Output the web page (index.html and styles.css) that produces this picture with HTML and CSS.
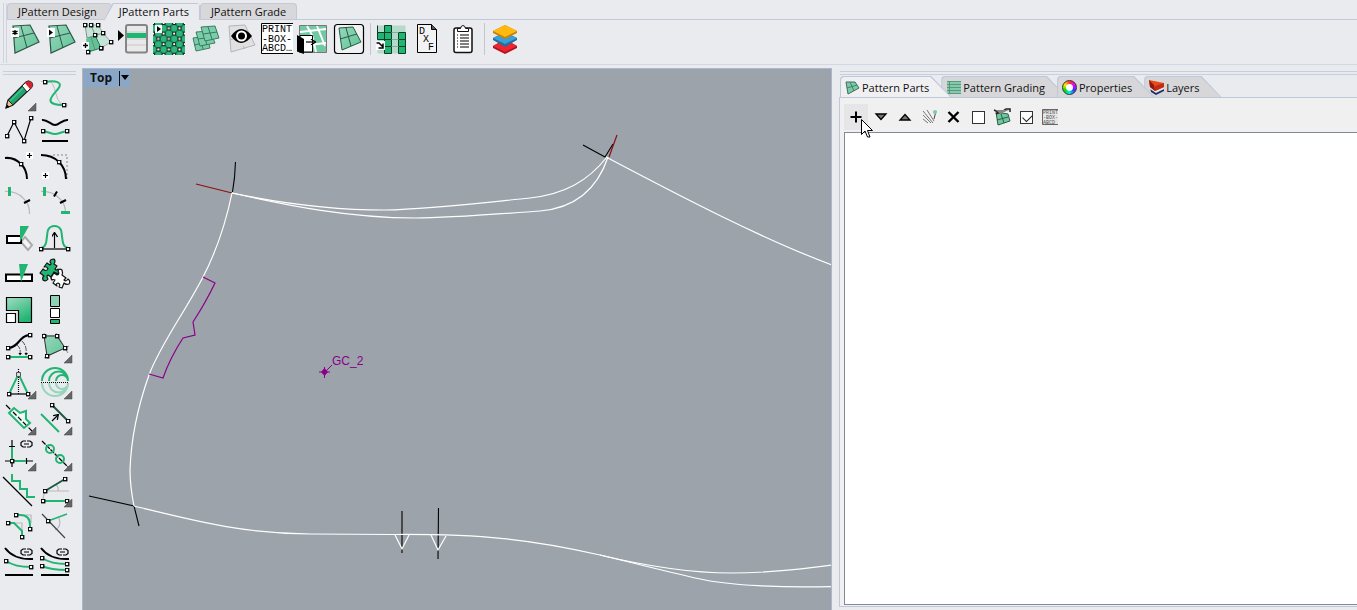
FILE: index.html
```html
<!DOCTYPE html>
<html lang="en">
<head>
<meta charset="utf-8">
<title>JPattern Parts</title>
<link rel="stylesheet" href="styles.css">
</head>
<body>
<svg class="defs" aria-hidden="true">
  <defs>
    <marker id="node" viewBox="0 0 5 5" refX="2.5" refY="2.5" markerWidth="5" markerHeight="5" markerUnits="userSpaceOnUse"><rect x=".75" y=".75" width="3.5" height="3.5" fill="#fff" stroke="#000" stroke-width="1.3"/></marker>
    <marker id="tip" viewBox="0 0 6 6" refX="5" refY="3" markerWidth="6" markerHeight="6" markerUnits="userSpaceOnUse" orient="auto"><path d="M1 0L5.5 3L1 6" fill="none" stroke="#000" stroke-width="1.3"/></marker>
    <linearGradient id="mint" x1="0" y1="0" x2="1" y2="1"><stop offset="0" stop-color="#98d6bb"/><stop offset="1" stop-color="#5fc597"/></linearGradient>
    <linearGradient id="deep" x1="0" y1="0" x2=".6" y2="1"><stop offset="0" stop-color="#a3dcc4"/><stop offset="1" stop-color="#21b573"/></linearGradient>
    <pattern id="net" x="2" y="2" width="10.600" height="10.600" patternUnits="userSpaceOnUse"><rect width="11" height="11" fill="#2db67b"/><path d="M0 0L10.600 10.600M10.600 0L0 10.600" stroke="#0f7a4d" stroke-width="1.400"/><g fill="#fff" stroke="#000" stroke-width=".9"><path d="M3.800 3.800h3v3h-3zM-1.500 -1.500h3v3h-3zM9.100 -1.500h3v3h-3zM-1.500 9.100h3v3h-3zM9.100 9.100h3v3h-3z"/></g></pattern>
    <symbol id="patch" viewBox="0 0 36 36"><path d="M6 5L23 4L32 21L8 32Z" fill="url(#mint)" stroke="#2f5546" stroke-width="1.2"/><path d="M14 5L20 27M7 17L27 12" stroke="#2f5546" stroke-width="1" fill="none"/></symbol>
    <symbol id="chain" viewBox="0 0 13 8"><path d="M6 1H3L1 2.500V5.500L3 7H6M7 1H10L12 2.500V5.500L10 7H7M4 4H9" fill="none" stroke="#000" stroke-width="1.2"/></symbol>
    <symbol id="corner" viewBox="0 0 36 36"><path d="M35 27V35H27Z" fill="#666" stroke="#444" stroke-width=".5"/></symbol>
  </defs>
</svg>

<header class="ribbon">
  <div class="grip-v"></div>
  <div class="ribbon-main">
    <nav class="ribbon-tabs" role="tablist">
      <button class="rtab" role="tab">JPattern Design</button>
      <button class="rtab on" role="tab" aria-selected="true">JPattern Parts</button>
      <button class="rtab" role="tab">JPattern Grade</button>
    </nav>
    <div class="ribbon-tools" role="toolbar">
      <button class="tool" aria-label="New pattern part"><svg viewBox="0 0 36 36"><use href="#patch"/><path d="M4 7h8v9h-8z" fill="#fff"/><path d="M8 9v5M5.500 10.200l5 2.600M10.500 10.200l-5 2.600" stroke="#000" stroke-width="1.300"/></svg></button>
      <button class="tool" aria-label="Select part"><svg viewBox="0 0 36 36"><use href="#patch"/><path d="M4 7h8v9h-8z" fill="#fff"/><path d="M6 8.500l4 3-4 3z"/></svg></button>
      <button class="tool" aria-label="Add geometry"><svg viewBox="0 0 36 36"><path d="M7 4H19L32 21L22 27L17 14L7 18Z" fill="#c3e4d6"/><path d="M7 18L16 14L22 27L9 31Z" fill="#5fc597"/><path d="M12 4L16 14M6 4L8 17L24 12M12 16L16 29" fill="none" stroke="#777" stroke-width=".8"/><path d="M6 4L12 4L19 4L24 12L32 21L22 27" fill="none" stroke="#999" stroke-width=".8" marker-start="url(#node)" marker-mid="url(#node)" marker-end="url(#node)"/><path d="M16 14L22 27L9 31" fill="none" stroke="#275" stroke-width="1" marker-start="url(#node)" marker-mid="url(#node)" marker-end="url(#node)"/><path d="M3 21h7v7h-7z" fill="#fff"/><path d="M6.500 22v5M4 24.500h5" stroke="#000" stroke-width="1.300"/></svg></button>
      <button class="tool" aria-label="Part list"><svg viewBox="0 0 36 36"><path d="M3 9l6 5.500-6 5.500z"/><rect x="11" y="4" width="21" height="27.500" rx="2" fill="#e9e9e9" stroke="#858585" stroke-width="2"/><path d="M12 12h19v5h-19z" fill="#21b573"/><path d="M12 18h19M12 24h19M12 11h19" stroke="#c8c8c8"/></svg></button>
      <button class="tool" aria-label="Select net"><svg viewBox="0 0 36 36"><path d="M2 2h32v32h-32z" fill="url(#net)"/><path d="M4 4h7v8h-7z" fill="#fff"/><path d="M6 5l4 3-4 3z"/></svg></button>
      <button class="tool" aria-label="Duplicate part"><svg viewBox="0 0 36 36"><g fill="#7bcdaa" stroke="#2f7358" stroke-width=".9"><path d="M6 17L20 15L23 27L9 30ZM13 16L16 28M7 24L22 21"/><path d="M9 11L23 10L28 22L13 25ZM16 10L20 24M11 18L26 16"/><path d="M14 6L28 5L32 17L18 20ZM21 6L25 18M16 13L30 11"/></g></svg></button>
      <button class="tool" aria-label="Show parts"><svg viewBox="0 0 36 36"><path d="M6 5L22 4L32 24L8 31ZM7 19L12 17M24 20L28 15M20 25L22 28" fill="#e0e0e2" stroke="#b5b5b5"/><path d="M8 15Q18 1 29 15Q18 29 8 15Z"/><circle cx="18.500" cy="15" r="5.500" fill="#fff"/><circle cx="18.500" cy="15" r="3.500"/></svg></button>
      <button class="tool" aria-label="Print box"><svg viewBox="0 0 36 36"><path d="M2 2h32v31h-32z" fill="#fff"/><path d="M34 2.500H2.500V32.500H34" fill="none" stroke="#000"/><text class="pixel big" x="3" y="11">PRINT</text><text class="pixel big" x="3" y="21">-BOX-</text><text class="pixel big" x="3" y="30">ABCD…</text></svg></button>
      <button class="tool" aria-label="Export layout"><svg viewBox="0 0 36 36"><path d="M4.500 4.500h27v27h-27z" fill="#70c9a2" stroke="#777"/><path d="M5 11L31 8M5 25L31 22M12 5L17 14L21 31M22 5L30 25" stroke="#fff" stroke-width="2" fill="none"/><path d="M5 14.500h12.500v16.500h-12.500z" fill="#fff" stroke="#000"/><path d="M2 14L9 18V33L2 30.500Z"/><path d="M11 21H20" stroke="#000" stroke-width="1.200" marker-end="url(#tip)"/></svg></button>
      <button class="tool" aria-label="Framed part"><svg viewBox="0 0 36 36"><rect x="3.500" y="3.500" width="29" height="29" rx="3" fill="#eff1f3" stroke="#000" stroke-width="1.200"/><path d="M8 7L22 6L30 21L11 29Z" fill="url(#mint)" stroke="#275a45"/><path d="M15 7L20 25M9 18L26 13" stroke="#275a45"/></svg></button>
      <span class="sep"></span>
      <button class="tool" aria-label="Grading table"><svg viewBox="0 0 36 36"><path d="M4.500 4.500h28v28h-28z" fill="#b5d9ca"/><path d="M11.500 4.500h7v28h-7zM4.500 11.500h7v7h-7zM25.500 11.500h7v21h-7z" fill="#21b573"/><path d="M11.500 4.500v28M18.500 4.500v28M25.500 11.500v21M4.500 11.500h14M4.500 18.500h14M11.500 25.500h7M25.500 11.500h7v21h-7M25.500 18.500h7M25.500 25.500h7M4.500 4.500v14M11.500 4.500h7M11.500 32.500h7" fill="none" stroke="#063d26"/><path d="M18.500 18.500h7M18.500 25.500h7M18.500 11.500h7" stroke="#7fae9b"/><path d="M3 20h9v9h-9z" fill="#fff"/><path d="M3.500 22H6L10 26M10 22.500V27H5.500" fill="none" stroke="#000" stroke-width="1.500"/></svg></button>
      <button class="tool" aria-label="Export DXF"><svg viewBox="0 0 36 36"><path d="M8.500 3.500h14l5 5v23h-19z" fill="#f3f3f3" stroke="#000"/><path d="M22.500 3.500v5h5" fill="#555" stroke="#000"/><text class="pixel big" x="10" y="13">D</text><text class="pixel big" x="14" y="21">X</text><text class="pixel big" x="19" y="29">F</text></svg></button>
      <button class="tool" aria-label="Clipboard"><svg viewBox="0 0 36 36"><rect x="9" y="7" width="18" height="24.500" rx="2" fill="#fff" stroke="#111" stroke-width="1.500"/><path d="M12.500 10.500V7.500H15.500Q16 4.500 18 4.500Q20 4.500 20.500 7.500H23.500V10.500Z" fill="#fff" stroke="#111"/><path d="M12 14h1M15 14h9M12 17h1M15 17h9M12 20h1M15 20h9M12 23h1M15 23h9M12 26h1M15 26h9" stroke="#000" stroke-width="1.200"/></svg></button>
      <span class="sep"></span>
      <button class="tool" aria-label="Layers"><svg viewBox="0 0 36 36"><path d="M6 25L18 18L30 25V27L18 33L6 27Z" fill="#b5121b"/><path d="M6 25L18 19L30 25L18 31Z" fill="#ee2430"/><path d="M6 17L18 11L30 17V19L18 26L6 19Z" fill="#256f9f"/><path d="M6 17L18 11L30 17L18 23Z" fill="#3aa0da"/><path d="M6 10L18 4L30 10V12L18 18L6 12Z" fill="#c98205"/><path d="M6 10L18 4L30 10L18 16Z" fill="#ffb90f"/></svg></button>
    </div>
  </div>
</header>

<main class="work">
  <aside class="palette" role="toolbar">
    <div class="grip-h"></div>
    <div class="palette-grid">
      <button class="tool" aria-label="Pencil"><svg viewBox="0 0 36 36"><path d="M5 32L7 24L25 6Q28 4 30.500 6.500Q33 9 30 12L12 29Z" fill="#21a56d" stroke="#222" stroke-width="1.200"/><path d="M5 32L7 24L12 29Z" fill="#efc08c" stroke="#222"/><path d="M5 32L6 28.500L8.500 31Z"/><path d="M21 10L26 16L30 12Q33 9 30.500 6.500Q28 4 25 6Z" fill="#fff" stroke="#222"/><path d="M24 7L29 13L31 11Q32.500 8.500 30.500 6.500Q28 4.500 25 6Z" fill="#d3242c"/><path d="M9 25L22 12" stroke="#35c98b" stroke-width="1.500"/><use href="#corner"/></svg></button>
      <button class="tool" aria-label="Curve"><svg viewBox="0 0 36 36"><path d="M4 5.500H12Q16 5 19 18T31 29" fill="none" stroke="#bbb"/><path class="g" d="M8 6C18 4 27 6 21 13C15 20 5 29 27 29"/><path d="M8 6h.01" marker-start="url(#node)"/><path d="M27 29h.01" marker-start="url(#node)"/></svg></button>

      <button class="tool" aria-label="Polyline"><svg viewBox="0 0 36 36"><path class="b thin nodes" d="M6 24L13 10L23 29L30 6"/></svg></button>
      <button class="tool" aria-label="Average curve"><svg viewBox="0 0 36 36"><path class="b" d="M5 8C10 7 14 13 18 13S26 7 31 8M5 29H31"/><path class="g ends" d="M6 19C12 20 14 22 18 22S24 20 30 19"/></svg></button>

      <button class="tool" aria-label="Add point"><svg viewBox="0 0 36 36"><path class="b nodes-mid" d="M4 10Q13 9 20 16Q26 22 26 31"/><path d="M25 4h7v7h-7z" fill="#fff"/><path class="b thin" d="M28.500 5v5M26 7.500h5"/></svg></button>
      <button class="tool" aria-label="Add corner"><svg viewBox="0 0 36 36"><path d="M16 7H30V31" fill="none" stroke="#b8b8bc" stroke-width="2" stroke-dasharray="2 2"/><path class="b nodes-mid" d="M4 7Q15 7 22 14Q29 21 29 31"/><path d="M5 24h7v7h-7z" fill="#fff"/><path class="b thin" d="M8.500 25v5M6 27.500h5"/></svg></button>

      <button class="tool" aria-label="Point on arc"><svg viewBox="0 0 36 36"><path class="s" d="M4 7.500Q15 7 22 14Q29 20 28.500 30"/><path d="M8.500 3v9" stroke="#21b573" stroke-width="3"/><path class="b" d="M23 19l6-3"/></svg></button>
      <button class="tool" aria-label="Divide arc"><svg viewBox="0 0 36 36"><path class="s" d="M4 7.500Q15 7 22 14Q29 20 28.500 30"/><path d="M7.500 3v9M24 28.500h9" stroke="#21b573" stroke-width="3"/><path class="b" d="M17 12.500l3-5M23 19l6-3"/></svg></button>

      <button class="tool" aria-label="Cut"><svg viewBox="0 0 36 36"><path d="M24 17L31 25L27 30L20 22Z" fill="#f4f4f4" stroke="#aaa" stroke-width="2"/><path d="M6 16h14v7h-14z" fill="#fff" stroke="#000" stroke-width="2"/><path d="M19 6h9l-9 16z" fill="#21b573"/></svg></button>
      <button class="tool" aria-label="Bell curve"><svg viewBox="0 0 36 36"><path class="g" d="M4 28C11 27 9 17 11 10Q13 6 17.500 6T24 10C26 17 24 27 31 28"/><path class="b thin nodes" d="M4 29H31"/><path class="b thin" d="M17.500 28V13" marker-end="url(#tip)"/></svg></button>

      <button class="tool" aria-label="Split"><svg viewBox="0 0 36 36"><path d="M5 18.500h26v6.500h-26z" fill="#fff" stroke="#000" stroke-width="2"/><path d="M18 8h9l-7 18z" fill="#21b573"/></svg></button>
      <button class="tool" aria-label="Join pieces"><svg viewBox="0 0 36 36"><g stroke="#111" stroke-width="1.200" stroke-linejoin="round"><path d="M10 7L13 9Q15 8 13 6Q13 3 17 3Q19 5 17 8L20 10L18 13Q20 15 21 13Q24 14 22 17Q19 18 17 16L14 21L11 19Q9 20 11 23Q9 26 6 24Q5 21 7 20L3 17L6 13Q9 16 11 13Q10 10 7 11Z" fill="#21b573"/><path d="M17 17L20 19Q23 18 21 15Q22 12 25 14Q26 17 25 19L29 22L27 24Q29 26 31 23Q34 25 32 28Q29 29 27 27L25 32L22 31Q24 28 21 27Q18 28 20 30L16 27L18 24Q16 23 15 24Q13 22 15 20Z" fill="#fff"/></g></svg></button>

      <button class="tool" aria-label="Scale"><svg viewBox="0 0 36 36"><path d="M5.500 5.500H30.500V30.500H17.500V18.500H5.500Z" fill="url(#deep)" stroke="#000" stroke-width="1.200"/><path d="M5.500 21.500h9v9h-9z" fill="#fff" stroke="#000" stroke-width="1.200"/></svg></button>
      <button class="tool" aria-label="Distribute"><svg viewBox="0 0 36 36"><g stroke="#000"><path d="M13.500 3.500h9v11h-9z" fill="#8fd3b6"/><path d="M13.500 16.500h9v9h-9z" fill="#fff"/><path d="M13.500 27.500h9v4h-9z" fill="#21b573"/></g></svg></button>

      <button class="tool" aria-label="Project"><svg viewBox="0 0 36 36"><path class="b nodes" d="M7 20C18 20 18 7 29 7"/><path d="M16 17Q20 20 19 25M21 13Q26 18 25 25" fill="none" stroke="#555" stroke-dasharray="5 1"/><path d="M17.500 25h3.500l-2 2.500zM23.500 25h3.500l-2 2.500z"/><path class="g nodes" d="M7 29H29"/></svg></button>
      <button class="tool" aria-label="Close shape"><svg viewBox="0 0 36 36"><path d="M5 8H22M19 5L31 25M32 18L7 30M11 31L7 5" stroke="#888" stroke-width="1"/><path d="M7 8H20L28 20L10 28Z" fill="url(#mint)" stroke="#333"/><path class="nodes" d="M7 8L20 8L28 20L10 28" fill="none"/><use href="#corner"/></svg></button>

      <button class="tool" aria-label="Mirror"><svg viewBox="0 0 36 36"><path class="g" d="M8 30L17.500 10L27 30"/><path class="b thin nodes" d="M8 30H27"/><path d="M17.500 5V30" stroke="#000" stroke-dasharray="1 1" stroke-width="1.200"/><path d="M15.500 8.500h4v4h-4z" fill="#ddd" stroke="#555"/><use href="#corner"/></svg></button>
      <button class="tool" aria-label="Nested circles"><svg viewBox="0 0 36 36"><g fill="none" stroke="#21b573" stroke-width="2"><path d="M5 17A13 13 0 0 1 31 17M12 17A9.500 9.500 0 0 1 31 17M19 17A6 6 0 0 1 31 17"/><path d="M5 19A13 13 0 0 0 31 19M12 19A9.500 9.500 0 0 0 31 19M19 19A6 6 0 0 0 31 19" opacity=".4"/></g><path d="M4 18.500H32" stroke="#000" stroke-dasharray="1 1"/><use href="#corner"/></svg></button>

      <button class="tool" aria-label="Notch"><svg viewBox="0 0 36 36"><path class="b thin" stroke-dasharray="6 2" d="M5 5L31 31"/><path d="M8 13L13 8L19 13L25 11L25 19L29 23L23 28Z" fill="#eef8f4" stroke="#21b573" stroke-width="2"/><path class="b thin" stroke-dasharray="5 2" d="M12 12L25 25"/><use href="#corner"/></svg></button>
      <button class="tool" aria-label="Offset line"><svg viewBox="0 0 36 36"><path class="g" d="M4 14L22 32"/><path d="M15 5L31 21" stroke="#1b5a41" stroke-width="2" marker-start="url(#node)" marker-end="url(#node)"/><path class="b thin" d="M15 21L21 15" marker-end="url(#tip)"/><use href="#corner"/></svg></button>

      <button class="tool" aria-label="Linked axes"><svg viewBox="0 0 36 36"><path class="b thin" d="M11 4V31M4 25H32M8 10.500h6M25.500 22v6"/><path class="g" d="M11 11V25H25"/><path d="M11 25h.01" marker-start="url(#node)"/><use href="#chain" x="19" y="4" width="13" height="8"/><use href="#corner"/></svg></button>
      <button class="tool" aria-label="Button holes"><svg viewBox="0 0 36 36"><path class="b thin" stroke-dasharray="5 1" d="M5 5L32 32"/><circle class="g" cx="13" cy="13" r="4"/><circle class="g" cx="23" cy="23" r="4"/><use href="#corner"/></svg></button>

      <button class="tool" aria-label="Steps"><svg viewBox="0 0 36 36"><path class="b thin" d="M2 5L31 34"/><path class="g" d="M11 2V9H19V17H26V25H34"/></svg></button>
      <button class="tool" aria-label="Angle"><svg viewBox="0 0 36 36"><path class="s" d="M8 19H32M19 13Q22 15 21 19M8 19Q6 24 6 29"/><path d="M8 19L28 7" stroke="#1b5a41" stroke-width="2" marker-start="url(#node)" marker-end="url(#node)"/><path class="g nodes" d="M6 29H30"/><use href="#corner"/></svg></button>

      <button class="tool" aria-label="Round corners"><svg viewBox="0 0 36 36"><path class="s" d="M20 7H30V15M13 15H21V23"/><path class="g ends" d="M15 7H19Q29 7 29 17V21"/><path class="g ends" d="M7 15H13L21 23V29"/></svg></button>
      <button class="tool" aria-label="Measure angle"><svg viewBox="0 0 36 36"><path class="s" d="M22 10Q25 19 18 22"/><path d="M5 6L28 30" stroke="#444" stroke-width="1.200"/><path d="M11 13L30 6" stroke="#21b573" stroke-width="1.500" marker-start="url(#node)"/></svg></button>

      <button class="tool" aria-label="Linked offset"><svg viewBox="0 0 36 36"><path class="b" d="M4 4Q13 16 32 15M4 31H32"/><path class="g nodes" d="M5 17Q14 23 30 23"/><use href="#chain" x="19" y="4" width="13" height="8"/></svg></button>
      <button class="tool" aria-label="Linked multi offset"><svg viewBox="0 0 36 36"><path class="b" d="M4 4Q13 16 32 15M4 31H32"/><path class="g nodes" d="M5 14Q14 20 30 20"/><path class="g nodes" d="M5 22Q14 26 30 26"/><use href="#chain" x="19" y="4" width="13" height="8"/></svg></button>
    </div>
  </aside>

  <section class="viewport">
    <div class="view-title"><span>Top</span><button class="view-menu" aria-label="Viewport menu"><svg viewBox="0 0 10 6"><path d="M1 0h8L5 5z"/></svg></button></div>
    <svg class="drawing" role="img" aria-label="Pattern drawing">
      <g transform="translate(-83 -69)" fill="none">
        <g stroke="#000" stroke-width="1.100">
          <path d="M235.500 162Q235 178 232.500 192M583 145L605 157L613 144M89 496L134 506L139 526M402 511V553M438.500 508L438 559"/>
        </g>
        <path d="M196 184L232 193M617 135L609 157" stroke="#8b0f0f" stroke-width="1.200"/>
        <g stroke="#fff" stroke-width="1.200">
          <path d="M232 193C280 203 330 210 385 210C430 209 480 203 530 198C565 194 588 181 607 157"/>
          <path d="M232 193C290 206 350 218 415 218C450 218 500 214 540 211C575 208 597 190 608 157"/>
          <path d="M606 157C680 196 760 238 832 265"/>
          <path d="M232 193C226 222 216 252 203 277C185 312 160 345 149 375C138 406 131 440 130 470C130 485 132 496 134 506"/>
          <path d="M134 506C200 522 240 533 310 534L395 534.500C480 534 530 539 600 555C650 567 690 573 731 573C770 573 800 569 832 565"/>
          <path d="M600 555C650 567 680 575 705 580S780 588 832 586.500"/>
          <path d="M395 535L402 549L409 535M431 535L438 550L446 536"/>
        </g>
        <path d="M203 277L215 283Q206 302 193 322L195 335L183 338Q170 358 163 378L149 374" stroke="#8a008a" stroke-width="1.200"/>
        <path d="M319 372H330M324.500 367V378M325 372L332 365" stroke="#8a008a"/>
        <path d="M324.500 368L328 372L324.500 376L321 372Z" fill="#8a008a"/>
        <text class="mark" x="332" y="365">GC_2</text>
      </g>
    </svg>
  </section>

  <aside class="dock">
    <div class="grip-h"></div>
    <nav class="dock-tabs" role="tablist">
      <button class="dtab on" role="tab" aria-selected="true"><svg viewBox="0 0 15 15"><path d="M1 2L10 2L14 8L3 14Z" fill="#79cba8" stroke="#3f6f5c"/><path d="M5 2L9 11M2 8L12 5" stroke="#3f6f5c" stroke-width=".8"/></svg><span>Pattern Parts</span></button>
      <button class="dtab" role="tab"><svg viewBox="0 0 15 15"><path d="M1 1h14v13h-14z" fill="#84cbae"/><path d="M1 1.500h14M1 4.500h14M1 7.500h14M1 10.500h14M1 13.500h14M3.500 1v13" stroke="#4f8a73" stroke-width=".8"/></svg><span>Pattern Grading</span></button>
      <button class="dtab up" role="tab"><i class="wheel"></i><span>Properties</span></button>
      <button class="dtab" role="tab"><svg viewBox="0 0 15 15"><path d="M1 7L6 12L15 9V11L7 15L2 12Z" fill="#1c2f66"/><path d="M1 5L6 10L15 7V9L7 13L1 9Z" fill="#dfe4ee"/><path d="M0 0L15 3V7L6 11L1 7Z" fill="#e84a1e"/><path d="M0 0L5 5L6 11L1 7Z" fill="#8e1b0a"/><path d="M6 6L15 3V7L6 11Z" fill="#c22d12"/></svg><span>Layers</span></button>
    </nav>
    <div class="panel">
      <div class="panel-tools" role="toolbar">
        <button class="mini hot" aria-label="Add part"><svg viewBox="0 0 24 24"><path d="M12 6.500v11M6.500 12h11" stroke="#000" stroke-width="2"/></svg></button>
        <button class="mini" aria-label="Move down"><svg viewBox="0 0 24 24"><path d="M8 9h10l-5 5.500z" fill="#777" stroke="#000" stroke-width="1.300"/></svg></button>
        <button class="mini" aria-label="Move up"><svg viewBox="0 0 24 24"><path d="M8 15h10l-5-5.500z" fill="#777" stroke="#000" stroke-width="1.300"/></svg></button>
        <button class="mini" aria-label="Match"><svg viewBox="0 0 24 24"><path d="M7 6L17 18M7 10L15 18M11 5L18 16M7 14L12 18" stroke="#777" fill="none"/><path d="M18 14L20 6" stroke="#444"/><circle cx="19" cy="7" r="2" fill="#7cccaa"/></svg></button>
        <button class="mini" aria-label="Delete"><svg viewBox="0 0 24 24"><path d="M8.500 7l10 10M18.500 7l-10 10" stroke="#000" stroke-width="2.400"/></svg></button>
        <label class="mini"><input type="checkbox" aria-label="Unselect all"></label>
        <button class="mini" aria-label="Edit part"><svg viewBox="0 0 24 24"><path d="M8 7L20 9L22 16L10 20Z" fill="#6fc7a0" stroke="#315c4b"/><path d="M13 9L16 18M9 15L20 12" stroke="#315c4b"/><path d="M6 5L12 8L18 4H22V7M8 9L14 6" stroke="#222" stroke-width="1.500" fill="none"/><path d="M8 5H21L12 9Z" fill="#888"/></svg></button>
        <label class="mini"><input type="checkbox" aria-label="Select all" checked></label>
        <button class="mini" aria-label="Print box"><svg viewBox="0 0 24 24"><path d="M6 4h16v16h-16z" fill="#e6e6e6"/><path d="M22 4.500H6.500V19.500H22" fill="none" stroke="#666"/><text class="pixel tiny" x="7" y="9">PRINT</text><text class="pixel tiny" x="7" y="14">-BOX-</text><text class="pixel tiny" x="7" y="19">ABCD</text></svg></button>
        <svg class="cursor" viewBox="0 0 12 19" aria-hidden="true"><path d="M.5 .5V15.500L4 12L6.500 18H9L6.500 11.500H11.500Z" fill="#fff" stroke="#000"/></svg>
      </div>
      <div class="parts-list" role="listbox" aria-label="Pattern parts"></div>
    </div>
  </aside>
</main>
</body>
</html>
```
FILE: styles.css
```css
* { box-sizing: border-box; }
body {
  margin: 0;
  height: 100vh;
  display: flex;
  flex-direction: column;
  overflow: hidden;
  background: #eaebef;
  color: #111;
  font: 11px/16px "Open Sans", "Noto Sans", sans-serif;
}
button {
  margin: 0;
  padding: 0;
  border: 0;
  background: none;
  color: inherit;
  font: inherit;
}
svg { display: block; }
.defs { position: absolute; width: 0; height: 0; }

/* ribbon */
.ribbon {
  display: flex;
  flex: none;
  height: 65px;
  padding: 3px 0 0 3px;
  border-bottom: 1px solid #d3d7e3;
}
.grip-v {
  width: 4px;
  height: 60px;
  border: solid #cdd3e0;
  border-width: 0 1px;
}
.ribbon-main { flex: 1; }
.ribbon-tabs {
  display: flex;
  height: 17px;
  border-bottom: 1px solid #c0c8da;
}
.rtab {
  position: relative;
  z-index: 0;
  height: 16px;
  padding: 0 10px;
  border: 1px solid #c3c9d6;
  border-width: 1px 1px 0;
  border-radius: 4px 4px 0 0;
  background: #d8d8da;
  line-height: 15px;
  white-space: nowrap;
}
.rtab:first-child { padding-right: 14px; }
.rtab.on {
  z-index: 1;
  height: 17px;
  margin-left: -8px;
  padding: 0 11px 0 15px;
  border: 0;
  background: #c0c8da;
  line-height: 17px;
  clip-path: polygon(9px 0, 100% 0, 100% 100%, 0 100%);
}
.rtab.on::before {
  content: "";
  position: absolute;
  inset: 1px 1px 0;
  z-index: -1;
  background: #eaebef;
  clip-path: polygon(9px 0, 100% 0, 100% 100%, 0 100%);
}
.ribbon-tools { display: flex; height: 38px; padding-top: 1px; }
.tool { width: 36px; height: 36px; }
.tool svg { width: 36px; height: 36px; }
.sep {
  width: 6px;
  height: 32px;
  margin-top: 2px;
  background: linear-gradient(#c4c6cc, #c4c6cc) center / 1px 100% no-repeat;
}
.pixel { font: 9px "Liberation Mono", monospace; fill: #000; }
.pixel.big { font-size: 10px; }
.pixel.tiny { font-size: 5px; fill: #555; }

/* shared strokes of the tool glyphs */
.g { fill: none; stroke: #21b573; stroke-width: 2; }
.b { fill: none; stroke: #000; stroke-width: 2; }
.b.thin { stroke-width: 1.2; }
.s { fill: none; stroke: #b9b9bc; stroke-width: 1.2; }
.nodes { marker: url(#node); }
.nodes-mid { marker-mid: url(#node); }
.ends { marker-start: url(#node); marker-end: url(#node); }

/* work area */
.work { display: flex; flex: 1; min-height: 0; }
.grip-h {
  height: 4px;
  margin: 6px 6px 0 3px;
  border: solid #c6cfe0;
  border-width: 1px 0;
}
.palette { width: 82px; }
.palette-grid {
  display: grid;
  grid-template-columns: 36px 36px;
  grid-auto-rows: 36px;
  padding: 1px 0 0 1px;
}
.viewport {
  position: relative;
  flex: 1;
  margin-top: 3px;
  border: 1px solid #a9b7cf;
  border-bottom: 0;
  background: #9da3ab;
}
.drawing { width: 100%; height: 100%; }
.mark { font: 12px "Liberation Sans", sans-serif; fill: #8a008a; }
.view-title {
  position: absolute;
  top: 0;
  left: 1px;
  display: flex;
  align-items: center;
  height: 18px;
  padding-left: 6px;
  background: #8ba7c8;
  font-size: 12px;
  font-weight: bold;
}
.view-menu {
  display: flex;
  align-items: center;
  height: 15px;
  margin-left: 7px;
  border-left: 1px solid #111;
}
.view-menu svg { width: 10px; height: 6px; }

/* docked panel */
.dock {
  display: flex;
  flex-direction: column;
  flex: 0 0 525px;
  padding: 0 0 3px 7px;
}
.dock .grip-h { flex: none; margin: 6px 0 0 1px; }
.dock-tabs { display: flex; height: 21px; margin-top: 1px; padding-left: 1px; }
.dtab {
  position: relative;
  z-index: 0;
  display: flex;
  align-items: center;
  gap: 2px;
  height: 21px;
  margin: 0 -10px 0 0;
  padding: 2px 22px 0 5px;
  white-space: nowrap;
}
.dtab::before,
.dtab::after {
  content: "";
  position: absolute;
  z-index: -1;
  inset: 0;
  border-radius: 4px 0 0 0;
  background: #bfc8da;
  clip-path: polygon(0 0, calc(100% - 20px) 0, 100% 100%, 0 100%);
}
.dtab::after { inset: 1px 1px 0; background: #d7d7d9; }
.dtab.on, .dtab.up { z-index: 1; }
.dtab.on::after { background: #f0f0f2; }
.dtab svg, .wheel { width: 15px; height: 15px; }
.wheel {
  border-radius: 50%;
  background: radial-gradient(circle, #fff 3px, transparent 4px), conic-gradient(#f33, #e0f, #33f, #0ee, #0d0, #fe0, #f33);
  border: 1px solid #333;
}
.panel {
  display: flex;
  flex: 1;
  flex-direction: column;
  padding: 0 0 1px 4px;
  border: 1px solid #bfc8da;
  border-right: 0;
  background: #f0f0f0;
}
.panel-tools {
  position: relative;
  display: flex;
  align-items: center;
  height: 34px;
  padding-top: 4px;
}
.mini { display: flex; align-items: center; justify-content: center; width: 24px; height: 26px; }
.mini svg { width: 24px; height: 24px; }
.hot { background: #e6e6e8; }
.mini input {
  appearance: none;
  width: 13px;
  height: 13px;
  margin: 0 0 0 4px;
  border: 1px solid #333;
  background: #fff;
}
.mini input:checked::before {
  content: "";
  display: block;
  width: 8px;
  height: 5px;
  margin: 2px 0 0 2px;
  border: solid #222;
  border-width: 0 0 1px 1px;
  transform: rotate(-45deg);
}
.panel-tools .cursor { position: absolute; left: 17px; top: 21px; width: 12px; height: 19px; z-index: 2; }
.parts-list {
  flex: 1;
  border: 1px solid #828a9a;
  border-right: 0;
  background: #fff;
}
```
